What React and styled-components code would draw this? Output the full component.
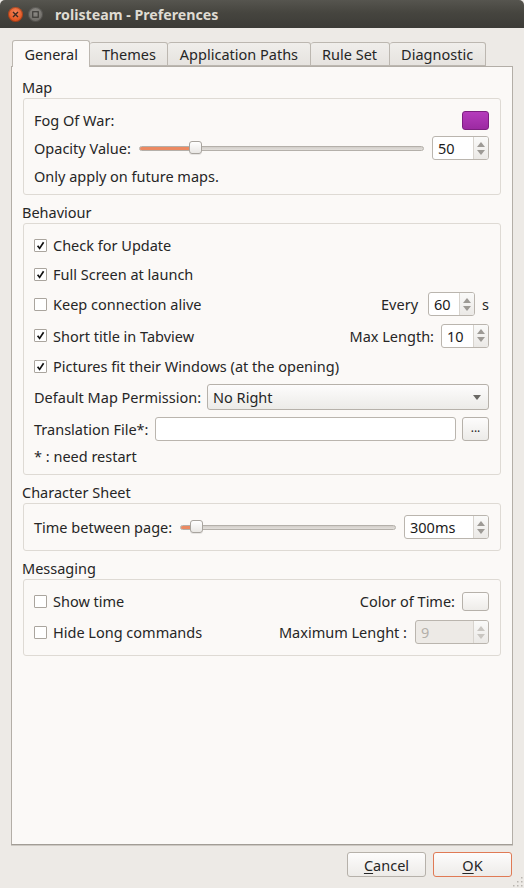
import styled, { createGlobalStyle } from 'styled-components'

const GlobalStyle = createGlobalStyle`
  html, body {
    margin: 0;
    padding: 0;
    background: #edeae6;
  }
  body {
    font-family: "Noto Sans", "DejaVu Sans", sans-serif;
    font-size: 14.5px;
    color: #262626;
  }
`

const Window = styled.div`
  width: 524px;
  height: 888px;
  display: flex;
  flex-direction: column;
  background: #edeae6;
  position: relative;
  overflow: hidden;
`

const TitleBar = styled.div`
  height: 28px;
  flex: none;
  display: flex;
  align-items: center;
  padding-left: 8px;
  gap: 5px;
  border-radius: 5px 5px 0 0;
  background: linear-gradient(to bottom, #56554f 0%, #46453f 45%, #3c3b37 100%);
`

const WinButton = styled.span`
  width: 15px;
  height: 15px;
  border-radius: 50%;
  display: flex;
  align-items: center;
  justify-content: center;
  background: ${p => p.$close
    ? 'radial-gradient(circle at 50% 35%, #f4845a 0%, #e45a25 60%, #c8461a 100%)'
    : 'radial-gradient(circle at 50% 35%, #8c8a85 0%, #6f6d68 70%, #5f5d58 100%)'};
  box-shadow: inset 0 0 0 1px rgba(0, 0, 0, 0.25);
`

const Title = styled.span`
  margin-left: 7px;
  font-weight: bold;
  font-size: 14.2px;
  color: #dfdbd2;
`

const Main = styled.div`
  flex: 1;
  display: flex;
  flex-direction: column;
  padding: 12px 11px 0 11px;
`

const TabBar = styled.div`
  display: flex;
  align-items: flex-end;
  height: 26px;
  padding-left: 1px;
  position: relative;
  z-index: 1;
`

const Tab = styled.div`
  height: ${p => (p.$active ? '27px' : '24px')};
  margin-bottom: ${p => (p.$active ? '-1px' : '0')};
  box-sizing: border-box;
  padding: 0 11.5px;
  display: flex;
  align-items: center;
  border: 1px solid #bcb7b0;
  border-bottom: ${p => (p.$active ? 'none' : '1px solid #bcb7b0')};
  border-left: ${p => (p.$first ? '1px solid #bcb7b0' : 'none')};
  border-radius: 3px 3px 0 0;
  background: ${p => (p.$active ? '#fbf9f7' : 'linear-gradient(to bottom, #f0eeeb, #e6e3df)')};
  color: #262626;
  white-space: nowrap;
`

const Pane = styled.div`
  flex: 1;
  border: 1px solid #b3aea7;
  border-bottom-color: #a29d96;
  box-shadow: 0 1px 0 #cdc9c3;
  background: #fbf9f7;
  padding: 9px 11px 0 10px;
  display: flex;
  flex-direction: column;
`

const GroupTitle = styled.div`
  height: 22px;
  line-height: 22px;
`

const GroupBox = styled.div`
  margin: 0 0 6px 1px;
  border: 1px solid #dedad4;
  border-radius: 3px;
  padding: ${p => p.$pad || '10px 11px 10px 10px'};
  display: flex;
  flex-direction: column;
  gap: ${p => p.$gap || 7}px;
`

const Row = styled.div`
  height: ${p => p.$h || 22}px;
  display: flex;
  align-items: center;
  gap: ${p => p.$gap || 7}px;
  white-space: nowrap;
`

const Spacer = styled.div`
  flex: 1;
`

const CheckBox = styled.span`
  width: 13px;
  height: 13px;
  box-sizing: border-box;
  border: 1px solid #aaa59e;
  border-radius: 1px;
  background: #ffffff;
  display: flex;
  align-items: center;
  justify-content: center;
  flex: none;
`

const CheckLabel = styled.span`
  display: flex;
  align-items: center;
  gap: 6px;
`

const ColorButton = styled.span`
  width: 27px;
  height: 19px;
  box-sizing: border-box;
  border-radius: 3px;
  border: 1px solid ${p => (p.$color ? '#7d1f80' : '#b6b1aa')};
  background: ${p => (p.$color
    ? `linear-gradient(to bottom, #b53cbc, ${p.$color})`
    : 'linear-gradient(to bottom, #fdfcfb, #eeece9)')};
  flex: none;
`

const SpinFrame = styled.div`
  width: ${p => p.$w}px;
  height: 24px;
  box-sizing: border-box;
  border: 1px solid #bab5ae;
  border-radius: 3px;
  background: ${p => (p.$disabled ? '#edeae6' : '#ffffff')};
  display: flex;
  flex: none;
  overflow: hidden;
`

const SpinValue = styled.span`
  flex: 1;
  padding-left: 5px;
  line-height: 22px;
  color: ${p => (p.$disabled ? '#b4b0aa' : '#1a1a1a')};
`

const SpinArrows = styled.span`
  width: 14px;
  border-left: 1px solid #d8d4ce;
  background: linear-gradient(to bottom, #fafaf9, #ebe9e6);
  display: flex;
  flex-direction: column;
  align-items: center;
  justify-content: center;
  gap: 3px;
`

const SliderTrack = styled.div`
  flex: 1;
  height: 14px;
  position: relative;
  display: flex;
  align-items: center;
`

const Groove = styled.div`
  flex: 1;
  height: 5px;
  box-sizing: border-box;
  border: 1px solid #b4b0aa;
  border-radius: 3px;
  background: linear-gradient(to bottom, #d2cec9, #e2dfdb);
  overflow: hidden;
  display: flex;
`

const GrooveFill = styled.div`
  background: #ec8a62;
  border-right: 1px solid #c8613d;
`

const Handle = styled.div`
  position: absolute;
  top: 0;
  width: 13px;
  height: 13px;
  box-sizing: border-box;
  border: 1px solid #a8a49e;
  border-radius: 3px;
  background: linear-gradient(to bottom, #ffffff, #e9e7e4);
  box-shadow: 0 1px 0 rgba(0, 0, 0, 0.08);
`

const Combo = styled.div`
  flex: 1;
  height: 26px;
  box-sizing: border-box;
  border: 1px solid #b6b1aa;
  border-radius: 3px;
  background: linear-gradient(to bottom, #fdfcfc, #ecebe8);
  display: flex;
  align-items: center;
  padding: 0 7px 0 5px;
`

const TextInput = styled.div`
  flex: 1;
  height: 24px;
  box-sizing: border-box;
  border: 1px solid #bab5ae;
  border-radius: 3px;
  background: #ffffff;
`

const ToolButton = styled.div`
  width: 27px;
  height: 24px;
  box-sizing: border-box;
  border: 1px solid #b6b1aa;
  border-radius: 3px;
  background: linear-gradient(to bottom, #fdfcfc, #ecebe8);
  display: flex;
  align-items: center;
  justify-content: center;
  font-size: 12px;
  padding-bottom: 4px;
  flex: none;
`

const Footer = styled.div`
  height: 43px;
  flex: none;
  box-sizing: border-box;
  display: flex;
  justify-content: flex-end;
  gap: 7px;
  padding: 7px 12px 11px 0;
`

const PushButton = styled.div`
  width: 79px;
  height: 25px;
  box-sizing: border-box;
  border: 1px solid ${p => (p.$default ? '#e07a55' : '#b6b1aa')};
  border-radius: 3px;
  background: linear-gradient(to bottom, #fdfcfc, #edebe8);
  display: flex;
  align-items: center;
  justify-content: center;
  u {
    text-decoration-thickness: 1px;
    text-underline-offset: 2px;
  }
`

const Grip = styled.svg`
  position: absolute;
  right: 1px;
  bottom: 1px;
`

const Check = ({ checked, children }) => (
  <CheckLabel>
    <CheckBox>
      {checked && (
        <svg width="9" height="9" viewBox="0 0 9 9">
          <path d="M1.6 4.8 L3.6 7.4 L7.6 1.2" fill="none" stroke="#111" strokeWidth="1.7" />
        </svg>
      )}
    </CheckBox>
    {children}
  </CheckLabel>
)

const SpinBox = ({ w, value, disabled }) => (
  <SpinFrame $w={w} $disabled={disabled}>
    <SpinValue $disabled={disabled}>{value}</SpinValue>
    <SpinArrows>
      <svg width="8" height="5" viewBox="0 0 8 5"><path d="M0 5 L4 0 L8 5 Z" fill={disabled ? '#c9c6c1' : '#9d9a95'} /></svg>
      <svg width="8" height="5" viewBox="0 0 8 5"><path d="M0 0 L4 5 L8 0 Z" fill={disabled ? '#c9c6c1' : '#9d9a95'} /></svg>
    </SpinArrows>
  </SpinFrame>
)

const Slider = ({ pos }) => (
  <SliderTrack>
    <Groove>
      <GrooveFill style={{ width: pos + 4 }} />
    </Groove>
    <Handle style={{ left: pos }} />
  </SliderTrack>
)

export default function App() {
  return (
    <Window>
      <GlobalStyle />
      <TitleBar>
        <WinButton $close>
          <svg width="7" height="7" viewBox="0 0 7 7">
            <path d="M1 1 L6 6 M6 1 L1 6" stroke="#3b2a22" strokeWidth="1.4" />
          </svg>
        </WinButton>
        <WinButton>
          <svg width="7" height="7" viewBox="0 0 7 7">
            <rect x="0.75" y="0.75" width="5.5" height="5.5" fill="none" stroke="#3c3b37" strokeWidth="1.2" />
          </svg>
        </WinButton>
        <Title>rolisteam - Preferences</Title>
      </TitleBar>

      <Main>
        <TabBar>
          <Tab $active $first>General</Tab>
          <Tab>Themes</Tab>
          <Tab>Application Paths</Tab>
          <Tab>Rule Set</Tab>
          <Tab>Diagnostic</Tab>
        </TabBar>

        <Pane>
          <GroupTitle>Map</GroupTitle>
          <GroupBox $pad="10px 11px 7px 10px" $gap={6}>
            <Row>
              Fog Of War:
              <Spacer />
              <ColorButton $color="#9c2aa2" />
            </Row>
            <Row $gap={8}>
              Opacity Value:
              <Slider pos={50} />
              <SpinBox w={57} value="50" />
            </Row>
            <Row>Only apply on future maps.</Row>
          </GroupBox>

          <GroupTitle>Behaviour</GroupTitle>
          <GroupBox>
            <Row><Check checked>Check for Update</Check></Row>
            <Row><Check checked>Full Screen at launch</Check></Row>
            <Row $h={24}>
              <Check>Keep connection alive</Check>
              <Spacer />
              <span style={{ marginRight: 3 }}>Every</span>
              <SpinBox w={47} value="60" />
              <span>s</span>
            </Row>
            <Row $h={25}>
              <Check checked>Short title in Tabview</Check>
              <Spacer />
              Max Length:
              <SpinBox w={48} value="10" />
            </Row>
            <Row><Check checked>Pictures fit their Windows (at the opening)</Check></Row>
            <Row $h={26} $gap={6}>
              Default Map Permission:
              <Combo>
                No Right
                <Spacer />
                <svg width="8" height="5" viewBox="0 0 8 5"><path d="M0 0 L4 5 L8 0 Z" fill="#6a6864" /></svg>
              </Combo>
            </Row>
            <Row $h={24} $gap={6}>
              Translation File*:
              <TextInput />
              <ToolButton>...</ToolButton>
            </Row>
            <Row $h={16}>* : need restart</Row>
          </GroupBox>

          <GroupTitle>Character Sheet</GroupTitle>
          <GroupBox $pad="11px 11px 11px 10px">
            <Row $h={24} $gap={8}>
              Time between page:
              <Slider pos={10} />
              <SpinBox w={85} value="300ms" />
            </Row>
          </GroupBox>

          <GroupTitle>Messaging</GroupTitle>
          <GroupBox $pad="10px 11px 11px 10px" $gap={8}>
            <Row>
              <Check>Show time</Check>
              <Spacer />
              Color of Time:
              <ColorButton />
            </Row>
            <Row $h={24} $gap={8}>
              <Check>Hide Long commands</Check>
              <Spacer />
              Maximum Lenght :
              <SpinBox w={74} value="9" disabled />
            </Row>
          </GroupBox>
        </Pane>
      </Main>

      <Footer>
        <PushButton><span><u>C</u>ancel</span></PushButton>
        <PushButton $default><span><u>O</u>K</span></PushButton>
      </Footer>
      <Grip width="12" height="12" viewBox="0 0 12 12">
        {[[10, 2], [10, 6], [6, 6], [10, 10], [6, 10], [2, 10]].map(([x, y]) => (
          <rect key={`${x}-${y}`} x={x} y={y} width="1.5" height="1.5" fill="#b9b5af" />
        ))}
      </Grip>
    </Window>
  )
}
